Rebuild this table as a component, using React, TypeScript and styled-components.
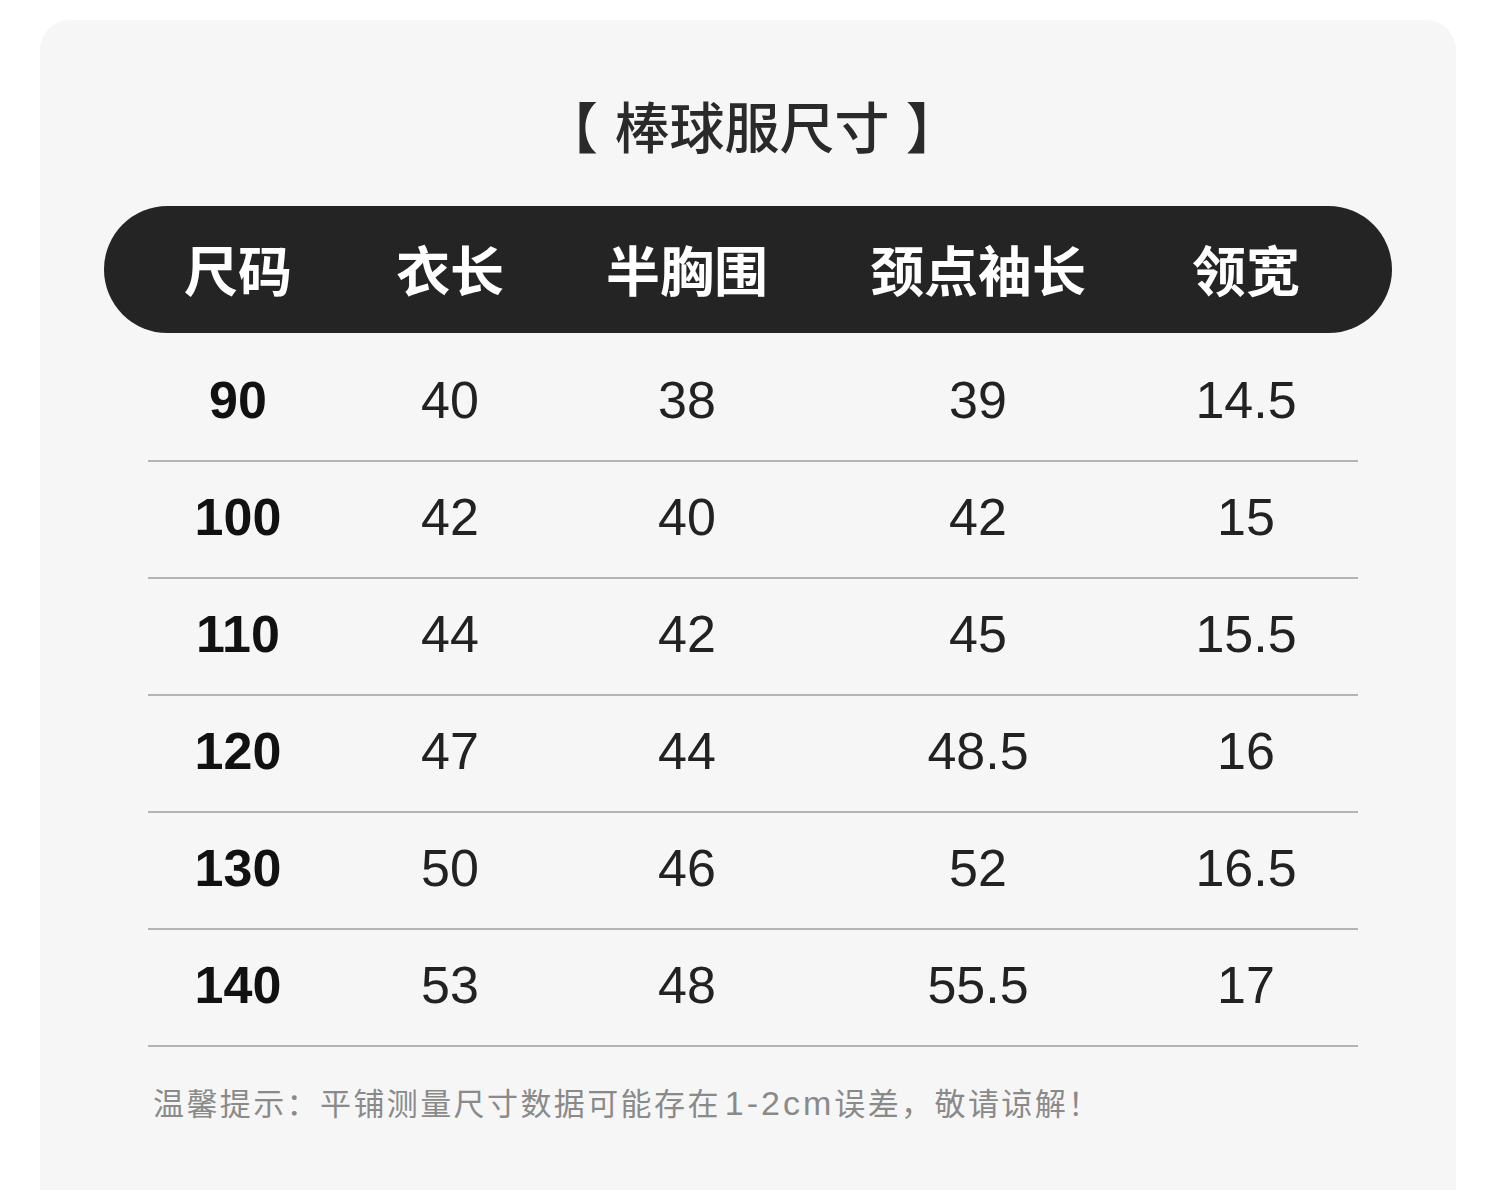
import styled, { createGlobalStyle } from "styled-components";

const GlobalStyle = createGlobalStyle`
  html, body {
    margin: 0;
    padding: 0;
    background: #ffffff;
  }
  body {
    font-family: "Liberation Sans", "Noto Sans CJK SC", sans-serif;
  }
`;

const columns = ["尺码", "衣长", "半胸围", "颈点袖长", "领宽"];

const sizes: string[][] = [
  ["90", "40", "38", "39", "14.5"],
  ["100", "42", "40", "42", "15"],
  ["110", "44", "42", "45", "15.5"],
  ["120", "47", "44", "48.5", "16"],
  ["130", "50", "46", "52", "16.5"],
  ["140", "53", "48", "55.5", "17"],
];

const App = () => {
  return (
    <>
      <GlobalStyle />
      <Card>
        <Title>【 棒球服尺寸 】</Title>

        <HeaderBar>
          {columns.map((c) => (
            <HeadCell key={c}>{c}</HeadCell>
          ))}
        </HeaderBar>

        <Rows>
          {sizes.map((row) => (
            <Row key={row[0]}>
              {row.map((v, i) => (
                <Cell key={i} $first={i === 0}>
                  {v}
                </Cell>
              ))}
            </Row>
          ))}
        </Rows>

        <Note>
          温馨提示：平铺测量尺寸数据可能存在<Latin>1-2cm</Latin>误差，敬请谅解！
        </Note>
      </Card>
    </>
  );
};

export default App;

const grid = `
  display: grid;
  grid-template-columns: 180px 244px 230px 352px 184px;
`;

const Card = styled.div`
  box-sizing: border-box;
  margin: 20px 44px 0 40px;
  height: 1170px;
  background: #f6f6f6;
  border-radius: 30px 30px 0 0;
  padding-top: 71px;
  overflow: hidden;
`;

const Title = styled.h1`
  margin: 0;
  height: 66px;
  line-height: 66px;
  text-align: center;
  font-family: "Noto Sans CJK SC", sans-serif;
  font-size: 55px;
  font-weight: 500;
  color: #2a2a2a;
  padding-left: 8px;
  word-spacing: 4px;
`;

const HeaderBar = styled.div`
  ${grid}
  box-sizing: border-box;
  margin: 49px 0 0 64px;
  width: 1288px;
  height: 127px;
  padding-left: 44px;
  align-items: center;
  background: #242424;
  border-radius: 64px;
`;

const HeadCell = styled.div`
  text-align: center;
  font-family: "Noto Sans CJK SC", sans-serif;
  font-size: 54px;
  font-weight: 700;
  color: #ffffff;
  line-height: 1;
  padding-bottom: 2px;
`;

const Rows = styled.div`
  margin: 12px 0 0 108px;
  width: 1210px;
`;

const Row = styled.div`
  ${grid}
  height: 115px;
  align-items: center;
  border-bottom: 2px solid #b4b4b4;
`;

const Cell = styled.div<{ $first?: boolean }>`
  text-align: center;
  font-family: "Liberation Sans", Arial, sans-serif;
  font-size: 52px;
  font-weight: ${(p) => (p.$first ? 700 : 400)};
  color: ${(p) => (p.$first ? "#111111" : "#222222")};
  line-height: 1;
  padding-bottom: 6px;
`;

const Note = styled.p`
  margin: 35px 0 0 113px;
  font-family: "Noto Sans CJK SC", sans-serif;
  font-size: 31px;
  letter-spacing: 2.4px;
  line-height: 40px;
  color: #8a8a8a;
  white-space: nowrap;
`;

const Latin = styled.span`
  font-family: "Liberation Sans", sans-serif;
  font-size: 34px;
  letter-spacing: 3px;
  padding-left: 4px;
`;
